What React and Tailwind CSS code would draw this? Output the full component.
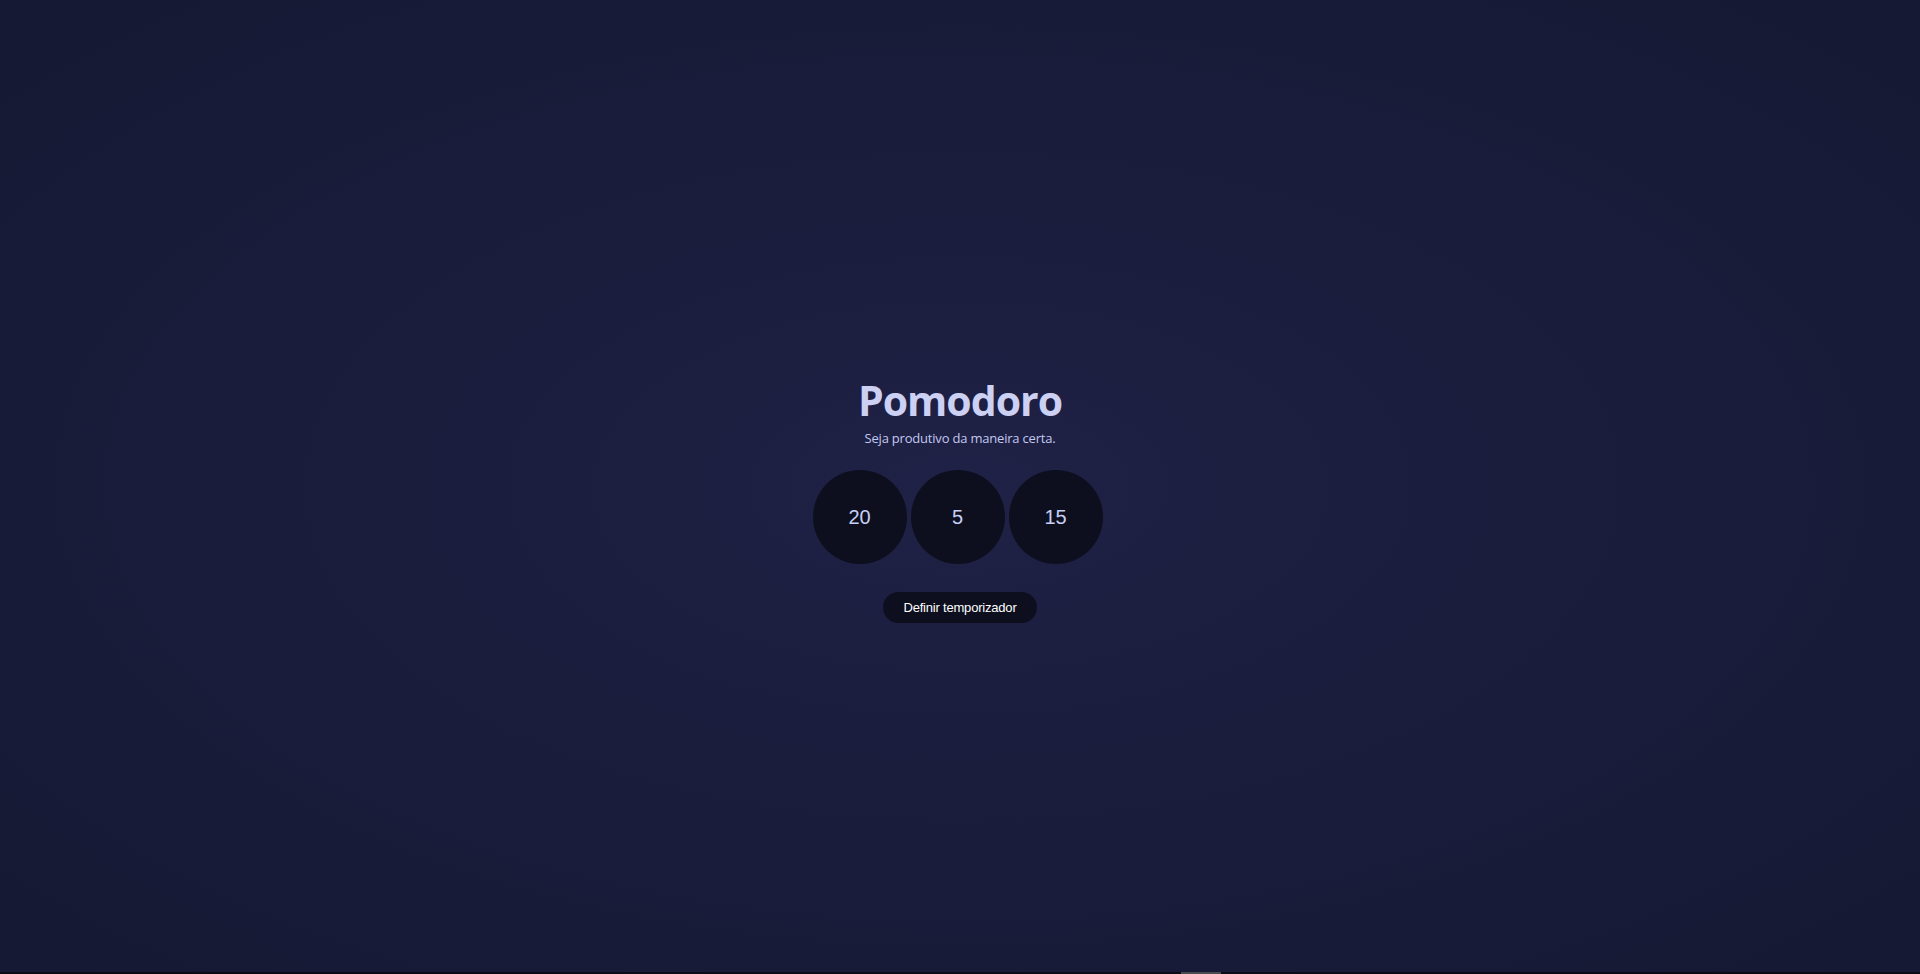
import React, { useState } from 'react';

const App = () => {
  const [tempos] = useState([20, 5, 15]);

  return (
    <div className="h-screen w-full flex flex-col bg-[radial-gradient(ellipse_at_center,#1f2146_0%,#1b1d3d_40%,#151933_100%)] overflow-hidden">
      <main className="flex-1 flex flex-col items-center pt-[375px]">
        {/* Title */}
        <h1 className="text-[41px] leading-[50px] font-bold text-[#ccd0f2] tracking-[-1px] font-['Open_Sans',sans-serif]">
          Pomodoro
        </h1>
        <p className="mt-[4px] text-[13px] leading-[18px] text-[#c3c9f0] tracking-[-0.2px] font-['Open_Sans',sans-serif]">
          Seja produtivo da maneira certa.
        </p>

        {/* Timer circles */}
        <div className="flex gap-[4px] mt-[23px] mr-[5px]">
          {tempos.map((t, i) => (
            <div
              key={i}
              className="w-[94px] h-[94px] rounded-full bg-[#0d0f1e] flex items-center justify-center text-[20px] text-[#c7cff5] font-['Liberation_Sans',Arial,sans-serif]"
            >
              {t}
            </div>
          ))}
        </div>

        <button className="mt-[28px] h-[31px] px-[20px] rounded-full bg-[#0d0f1e] text-white text-[13px] tracking-[-0.2px] font-['Liberation_Sans',Arial,sans-serif]">
          Definir temporizador
        </button>
      </main>

      {/* bottom scrollbar strip */}
      <div className="h-[2px] w-full bg-[#0b0c17] flex">
        <div className="ml-[1181px] w-[40px] h-full bg-[#4a4a4f]" />
      </div>
    </div>
  );
};

export default App;
